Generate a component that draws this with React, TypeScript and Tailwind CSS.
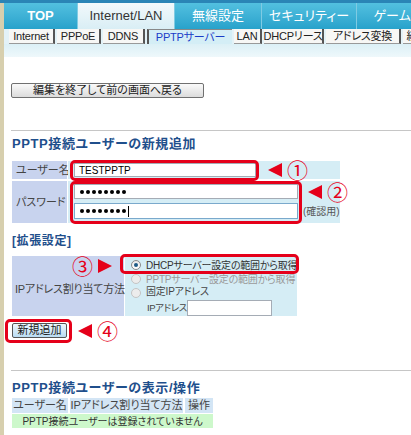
import React from 'react'

const jp = "font-['Liberation_Sans','Noto_Sans_CJK_JP',sans-serif] [font-feature-settings:'palt']"

function Tab({ label, active, w, bold }: { label: string; active?: boolean; w: string; bold?: boolean }) {
  return (
    <div
      className={`${w} h-full shrink-0 flex items-center justify-center text-[13px] border-r border-[#7fcbe3] ${
        active
          ? 'bg-gradient-to-b from-[#f2f9fb] to-[#d9eef5] text-[#333]'
          : 'bg-gradient-to-b from-[#52c0e0] to-[#27a2cb] text-white'
      } ${bold ? 'font-bold' : ''}`}
    >
      {label}
    </div>
  )
}

function SubTab({ label, w, active }: { label: string; w: string; active?: boolean }) {
  return (
    <div
      className={`${w} h-[15px] shrink-0 flex items-center justify-center text-[11px] leading-none tracking-[-0.2px] ${
        active
          ? 'bg-[#d4eef6] text-[#1a3cc8] border-l-2 border-t border-l-[#555] border-t-[#888]'
          : 'bg-[#f7f7f5] text-[#222] border-r-2 border-b border-r-[#555] border-b-[#999]'
      }`}
    >
      {label}
    </div>
  )
}

function Marker({ n, dir }: { n: string; dir: 'left' | 'right' }) {
  const tri = (
    <svg width="16" height="16" viewBox="0 0 16 16">
      {dir === 'left' ? <polygon points="15,1 15,15 1,8" fill="#e5001a" /> : <polygon points="1,1 1,15 15,8" fill="#e5001a" />}
    </svg>
  )
  const num = <span className="text-[21px] leading-none text-[#e5001a] font-['Noto_Sans_CJK_JP',sans-serif]">{n}</span>
  return (
    <div className="flex items-center gap-[4px]">
      {dir === 'left' ? tri : num}
      {dir === 'left' ? num : tri}
    </div>
  )
}

function Radio({ on, dim }: { on?: boolean; dim?: boolean }) {
  return (
    <div
      className={`w-[10px] h-[10px] rounded-full border flex items-center justify-center shrink-0 ${
        dim ? 'border-[#c4c4c4] bg-[#ececec]' : 'border-[#8a8a8a] bg-gradient-to-b from-[#e8e8e8] to-white'
      }`}
    >
      {on && <div className="w-[4px] h-[4px] rounded-full bg-[#1d5a86]" />}
    </div>
  )
}

function Dots({ count }: { count: number }) {
  return (
    <div className="flex gap-[2px]">
      {Array.from({ length: count }).map((_, i) => (
        <div key={i} className="w-[4px] h-[4px] rounded-full bg-black" />
      ))}
    </div>
  )
}

export default function App() {
  return (
    <div className={`w-[411px] h-[435px] overflow-hidden bg-white whitespace-nowrap ${jp}`}>
      <div className="h-[3px] bg-[#2a85b6]" />
      <div className="flex h-[432px]">
        <div className="w-[4px] shrink-0 bg-[#d7cfae]" />
        <div className="flex-1 min-w-0">
          {/* main tabs */}
          <div className="h-[26px] flex overflow-hidden">
            <Tab label="TOP" w="w-[74px]" bold />
            <Tab label="Internet/LAN" w="w-[97px]" active />
            <Tab label="無線設定" w="w-[87px]" />
            <Tab label="セキュリティー" w="w-[95px]" />
            <Tab label="ゲーム&" w="w-[80px]" />
          </div>
          {/* sub tabs */}
          <div className="h-[15px] flex gap-[2px] pl-[5px] bg-[#e3f2f7] overflow-hidden">
            <SubTab label="Internet" w="w-[46px]" />
            <SubTab label="PPPoE" w="w-[44px]" />
            <SubTab label="DDNS" w="w-[42px]" />
            <SubTab label="PPTPサーバー" w="w-[85px]" active />
            <SubTab label="LAN" w="w-[28px]" />
            <SubTab label="DHCPリース" w="w-[60px]" />
            <SubTab label="アドレス変換" w="w-[75px]" />
            <SubTab label="経" w="w-[20px]" />
          </div>
          <div className="h-[13px] bg-gradient-to-b from-[#dcf0f6] to-[#eef8fb]" />

          <div className="pl-[7px]">
            <button className="mt-[26px] w-[193px] h-[15px] flex items-center justify-center text-[11px] text-[#222] border border-[#707070] rounded-[2px] bg-gradient-to-b from-[#fafafa] to-[#dcdcdc]">
              編集を終了して前の画面へ戻る
            </button>

            <div className="mt-[32px] border-t border-[#c6c6c6]" />
            <h2 className="mt-[6px] h-[14px] leading-[14px] text-[13px] tracking-[0.6px] font-bold text-[#1f4f8c] ml-[1px]">
              PPTP接続ユーザーの新規追加
            </h2>

            {/* table 1 */}
            <div className="relative mt-[10px] ml-[1px] w-[326px] grid grid-cols-[55px_1fr] gap-x-[1px] gap-y-[2px] text-[11px] text-[#444]">
              <div className="h-[18px] bg-[#c8d3ee] flex items-center pl-[4px]">ユーザー名</div>
              <div className="h-[18px] bg-[#d5edf5] flex items-center pl-[6px]">
                <div className="w-[182px] h-[14px] bg-white border border-[#a5acb5] flex items-center pl-[4px] text-[10px] text-black">
                  TESTPPTP
                </div>
              </div>
              <div className="h-[42px] bg-[#c8d3ee] flex items-center pl-[4px]">パスワード</div>
              <div className="h-[42px] bg-[#d5edf5] flex pl-[6px] pt-[3px]">
                <div className="flex flex-col gap-[4px]">
                  <div className="w-[224px] h-[15px] bg-white border border-[#a5acb5] flex items-center pl-[5px]">
                    <Dots count={8} />
                  </div>
                  <div className="w-[224px] h-[16px] bg-white border border-[#7aa9cc] flex items-center pl-[5px]">
                    <Dots count={8} />
                    <span className="w-px h-[11px] bg-black ml-[2px]" />
                  </div>
                </div>
                <div className="self-end mb-[4px] ml-[5px] text-[10px] text-[#555]">(確認用)</div>
              </div>

              <div className="absolute left-[58px] top-[-1px] w-[189px] h-[21px] border-[3px] border-[#e5001a] rounded-[5px]" />
              <div className="absolute left-[58px] top-[20px] w-[232px] h-[43px] border-[3px] border-[#e5001a] rounded-[5px]" />
              <div className="absolute left-[255px] top-[-2px]">
                <Marker n="①" dir="left" />
              </div>
              <div className="absolute left-[295px] top-[20px]">
                <Marker n="②" dir="left" />
              </div>
            </div>

            <div className="mt-[11px] ml-[1px] h-[14px] leading-[14px] text-[12px] font-bold text-[#1f4f8c] tracking-[0.6px]">[拡張設定]</div>

            {/* table 2 */}
            <div className="relative mt-[8px] ml-[1px] w-[281px] grid grid-cols-[112px_1fr] gap-x-[1px] text-[11px] text-[#444]">
              <div className="h-[60px] bg-[#c8d3ee] flex items-center pl-[3px] pt-[6px] tracking-[-0.2px]">IPアドレス割り当て方法</div>
              <div className="h-[60px] bg-[#d5edf5] pl-[6px] pt-[2px] text-[10px] tracking-[-0.2px]">
                <div className="h-[14px] flex items-center gap-[5px]">
                  <Radio on />
                  <span className="text-[#333]">DHCPサーバー設定の範囲から取得</span>
                </div>
                <div className="h-[14px] flex items-center gap-[5px]">
                  <Radio dim />
                  <span className="text-[#9a9a9a]">PPTPサーバー設定の範囲から取得</span>
                </div>
                <div className="h-[14px] flex items-center gap-[5px]">
                  <Radio dim />
                  <span className="text-[#444] -mt-[3px]">固定IPアドレス</span>
                </div>
                <div className="h-[16px] flex items-center pl-[16px]">
                  <span className="text-[#444] shrink-0 text-[9.5px] tracking-[-0.4px]">IPアドレス</span>
                  <div className="w-[85px] h-[16px] shrink-0 bg-white border border-[#a5acb5]" />
                </div>
              </div>

              <div className="absolute left-[108px] top-[-2px] w-[179px] h-[20px] border-[3px] border-[#e5001a] rounded-[5px]" />
              <div className="absolute left-[60px] top-[-1px]">
                <Marker n="③" dir="right" />
              </div>
            </div>

            {/* add button */}
            <div className="relative mt-[7px] ml-[1px] h-[15px]">
              <button className="w-[55px] h-[15px] flex items-center justify-center text-[11px] text-[#222] border border-[#555] rounded-[2px] bg-gradient-to-b from-[#eef7fd] to-[#b9dcf3]">
                新規追加
              </button>
              <div className="absolute left-[-7px] top-[-4px] w-[67px] h-[24px] border-[3px] border-[#e5001a] rounded-[5px]" />
              <div className="absolute left-[65px] top-[-3px]">
                <Marker n="④" dir="left" />
              </div>
            </div>

            <div className="mt-[32px] border-t border-[#c6c6c6]" />
            <h2 className="mt-[10px] h-[14px] leading-[14px] text-[13px] tracking-[0.6px] font-bold text-[#1f4f8c] ml-[1px]">
              PPTP接続ユーザーの表示/操作
            </h2>

            {/* table 3 */}
            <div className="mt-[3px] ml-[1px] w-[201px] grid grid-cols-[56px_113px_28px] gap-x-[2px] gap-y-[1px] text-[11px] text-[#444]">
              <div className="h-[15px] bg-[#d3e5f5] flex items-center justify-center">ユーザー名</div>
              <div className="h-[15px] bg-[#d3e5f5] flex items-center justify-center">IPアドレス割り当て方法</div>
              <div className="h-[15px] bg-[#d3e5f5] flex items-center justify-center">操作</div>
              <div className="col-span-3 h-[14px] bg-[#cdf8cb] flex items-center justify-center text-[10px] text-[#333]">
                PPTP接続ユーザーは登録されていません
              </div>
            </div>
          </div>
        </div>
      </div>
    </div>
  )
}
